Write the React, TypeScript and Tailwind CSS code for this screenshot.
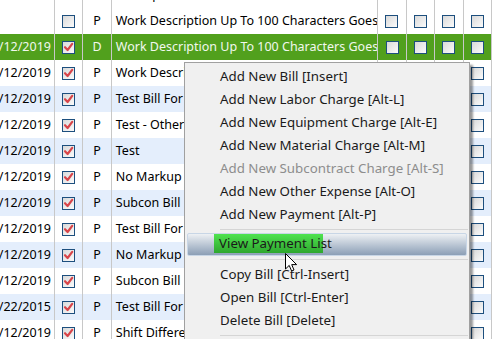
import React from 'react'

type Row = {
  date: string
  checked: boolean
  code: string
  desc: string
  tone: 'white' | 'blue' | 'green'
}

const rows: Row[] = [
  { date: '6/12/2019', checked: true, code: 'D', desc: 'Work Description Up To 100 Characters Goes', tone: 'green' },
  { date: '6/12/2019', checked: true, code: 'P', desc: 'Work Description Up To 100 Characters Goes', tone: 'white' },
  { date: '6/12/2019', checked: true, code: 'P', desc: 'Test Bill For Markup', tone: 'blue' },
  { date: '6/12/2019', checked: true, code: 'P', desc: 'Test - Other Expense', tone: 'white' },
  { date: '6/12/2019', checked: true, code: 'P', desc: 'Test', tone: 'blue' },
  { date: '6/12/2019', checked: true, code: 'P', desc: 'No Markup Bill', tone: 'white' },
  { date: '6/12/2019', checked: true, code: 'P', desc: 'Subcon Bill', tone: 'blue' },
  { date: '6/12/2019', checked: true, code: 'P', desc: 'Test Bill For Markup', tone: 'white' },
  { date: '6/12/2019', checked: true, code: 'P', desc: 'No Markup Bill', tone: 'blue' },
  { date: '6/12/2019', checked: true, code: 'P', desc: 'Subcon Bill', tone: 'white' },
  { date: '7/22/2015', checked: true, code: 'P', desc: 'Test Bill For Markup', tone: 'blue' },
  { date: '6/12/2019', checked: true, code: 'P', desc: 'Shift Differential', tone: 'white' },
]

const menu: ({ label: string; disabled?: boolean; active?: boolean } | 'sep')[] = [
  { label: 'Add New Bill [Insert]' },
  { label: 'Add New Labor Charge [Alt-L]' },
  { label: 'Add New Equipment Charge [Alt-E]' },
  { label: 'Add New Material Charge [Alt-M]' },
  { label: 'Add New Subcontract Charge [Alt-S]', disabled: true },
  { label: 'Add New Other Expense [Alt-O]' },
  { label: 'Add New Payment [Alt-P]' },
  'sep',
  { label: 'View Payment List', active: true },
  'sep',
  { label: 'Copy Bill [Ctrl-Insert]' },
  { label: 'Open Bill [Ctrl-Enter]' },
  { label: 'Delete Bill [Delete]' },
  'sep',
]

function Box({ checked }: { checked?: boolean }) {
  return (
    <div className="relative w-[13px] h-[13px] border border-[#1d4f7e] bg-gradient-to-br from-[#d9d9d9] to-[#fbfbfb]">
      {checked && (
        <svg width="13" height="13" viewBox="0 0 13 13" className="absolute -left-px -top-px">
          <path d="M3 6.2 L5.6 9 L10.2 2.8" fill="none" stroke="#d8454a" strokeWidth="2.2" strokeLinecap="round" strokeLinejoin="round" />
        </svg>
      )}
    </div>
  )
}

function GridRow({ row, header }: { row?: Row; header?: string }) {
  const bg = row?.tone === 'green' ? 'bg-[#51a01d] text-[#f2f8ee]' : row?.tone === 'blue' ? 'bg-[#e4eefc] text-black' : 'bg-white text-black'
  return (
    <div className={`flex h-[26px] items-center ${bg}`}>
      <div className="w-[56px] h-full flex items-center justify-end pr-[3px] border-r border-[#c8c8c8] overflow-hidden whitespace-nowrap">
        {row?.date}
      </div>
      <div className="w-[29px] h-full flex items-center justify-center border-r border-[#c8c8c8]">
        {row && <Box checked={row.checked} />}
      </div>
      <div className="w-[29px] h-full flex items-center justify-center border-r border-[#c8c8c8]">
        {row?.code}
      </div>
      <div className="w-[272px] h-full flex items-center pl-[4px] border-r border-[#c8c8c8] overflow-hidden whitespace-nowrap">
        {header ?? row?.desc}
      </div>
      {[0, 1, 2, 3].map((i) => (
        <div key={i} className="w-[29px] h-full flex items-center justify-center border-r border-[#c8c8c8]">
          {row && <Box />}
        </div>
      ))}
    </div>
  )
}

export default function App() {
  return (
    <div className="relative w-[492px] h-[339px] overflow-hidden bg-white text-[12.5px] font-['Noto_Sans',sans-serif]">
      <div className="-mt-[18px]">
        <GridRow header="Description" />
        <div className="flex h-[26px] items-center bg-white">
          <div className="w-[56px] h-full border-r border-[#c8c8c8]" />
          <div className="w-[29px] h-full flex items-center justify-center border-r border-[#c8c8c8]"><Box /></div>
          <div className="w-[29px] h-full flex items-center justify-center border-r border-[#c8c8c8]">P</div>
          <div className="w-[272px] h-full flex items-center pl-[4px] border-r border-[#c8c8c8] whitespace-nowrap overflow-hidden">Work Description Up To 100 Characters Goes</div>
          {[0, 1, 2, 3].map((i) => (
            <div key={i} className="w-[29px] h-full flex items-center justify-center border-r border-[#c8c8c8]"><Box /></div>
          ))}
        </div>
        {rows.map((r, i) => (
          <GridRow key={i} row={r} />
        ))}
      </div>

      {/* Context Menu */}
      <div className="absolute left-[184px] top-[62px] w-[286px] h-[300px] border border-[#a0a0a0] bg-[#f0f0f0] pt-[2px] shadow-[3px_3px_2px_rgba(0,0,0,0.4)] text-[13.3px] text-[#1a1a1a]">
        {menu.map((m, i) =>
          m === 'sep' ? (
            <div key={i} className="h-[7px] flex items-center pl-[35px] pr-[1px]">
              <div className="h-px flex-1 bg-[#d5d5d5]" />
            </div>
          ) : m.active ? (
            <div key={i} className="mx-[2px] h-[23px] border border-[#c8d6e6] rounded-[2px] bg-gradient-to-b from-[#eef1f4] to-[#8c9fb6]">
              <div className="ml-[26px] w-[109px] h-[19px] flex items-center pl-[5px] bg-gradient-to-b from-[#4fe34f] to-[#2ea72e] whitespace-nowrap">
                {m.label}
              </div>
            </div>
          ) : (
            <div key={i} className={`h-[23px] flex items-center pl-[35px] whitespace-nowrap ${m.disabled ? 'text-[#8d8d8d]' : ''}`}>
              {m.label}
            </div>
          )
        )}
      </div>

      {/* Mouse cursor */}
      <svg width="13" height="20" viewBox="0 0 13 20" className="absolute left-[285px] top-[253px]">
        <path d="M0.5 0.5 L0.5 16 L4.2 12.4 L6.6 18 L9 17 L6.7 11.6 L11.6 11.6 Z" fill="#fff" stroke="#000" strokeWidth="1" strokeLinejoin="round" />
      </svg>
    </div>
  )
}
